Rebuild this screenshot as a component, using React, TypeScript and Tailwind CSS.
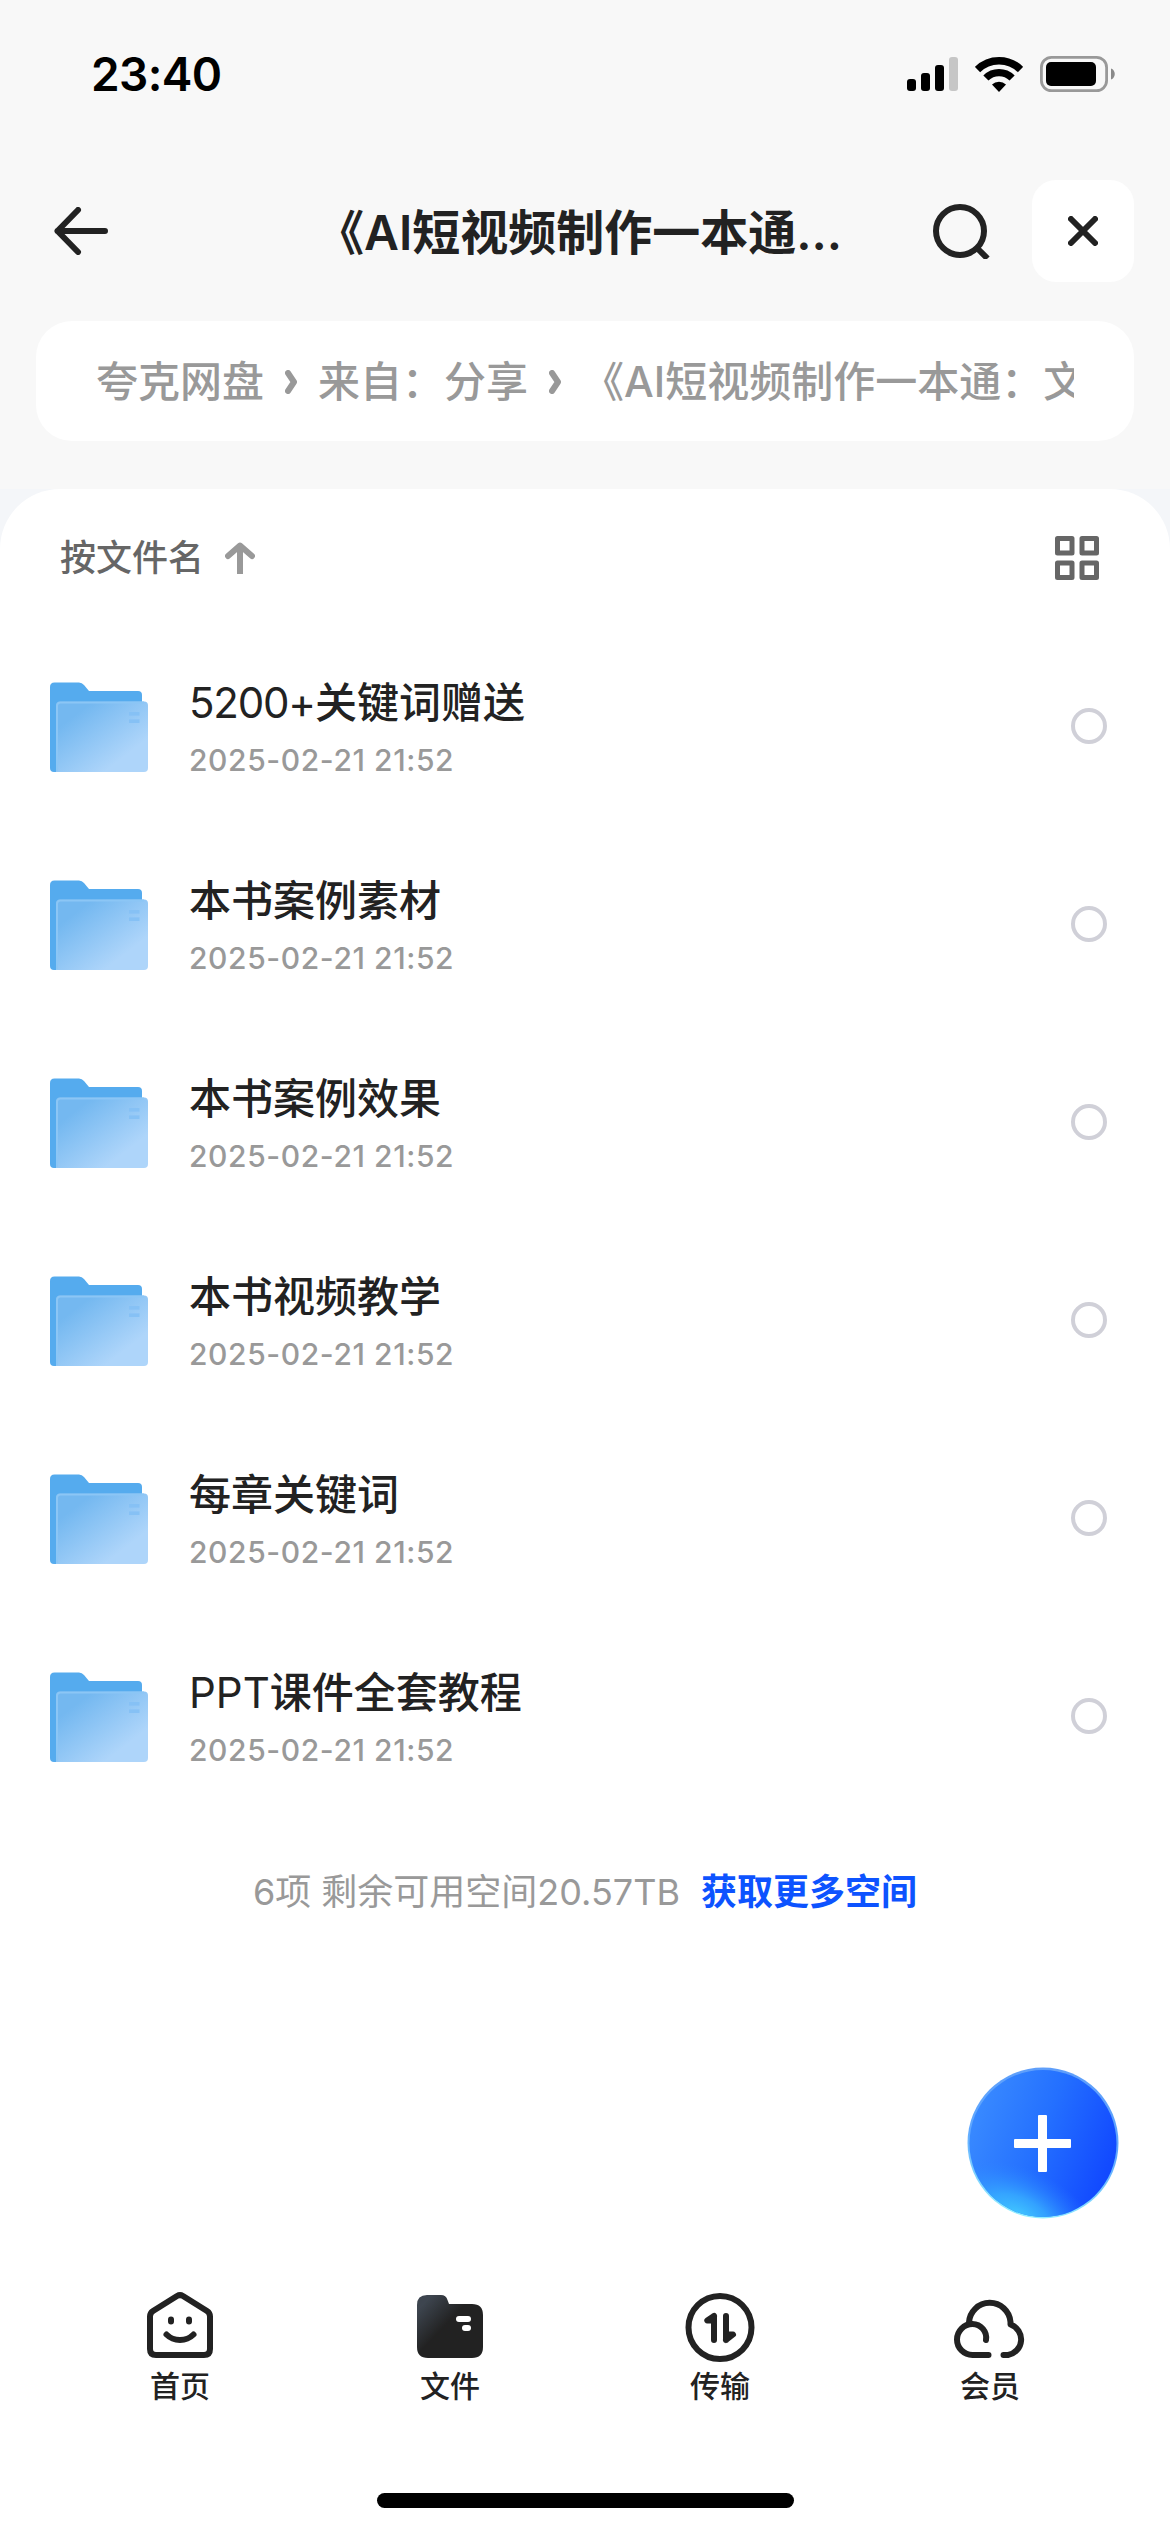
import React, { memo } from 'react';

interface FileItem {
  latin?: string;
  name: string;
  date: string;
}

const files: FileItem[] = [
  { latin: '5200+', name: '关键词赠送', date: '2025-02-21 21:52' },
  { name: '本书案例素材', date: '2025-02-21 21:52' },
  { name: '本书案例效果', date: '2025-02-21 21:52' },
  { name: '本书视频教学', date: '2025-02-21 21:52' },
  { name: '每章关键词', date: '2025-02-21 21:52' },
  { latin: 'PPT', name: '课件全套教程', date: '2025-02-21 21:52' },
];

function StatusBar() {
  return (
    <div className="flex h-[148px] items-center justify-between pr-[54px] pl-[91px]">
      <span className="text-[46px] leading-none font-semibold tracking-[-0.6px] text-black">23:40</span>
      <div className="flex items-center">
        <svg width="51" height="34" viewBox="0 0 51 34">
          <rect x="0" y="22" width="9" height="12" rx="3" />
          <rect x="14" y="16" width="9" height="18" rx="3" />
          <rect x="28" y="8" width="9" height="26" rx="3" />
          <rect x="42" y="0" width="9" height="34" rx="3" fill="#c6c6c6" />
        </svg>
        <svg className="ml-[17px]" width="48" height="36" viewBox="0 0 48 36">
          <path d="M2.5 13.5A30.5 30.5 0 0 1 45.5 13.5" fill="none" stroke="#000" strokeWidth="7.5" />
          <path d="M10.9 22A18.6 18.6 0 0 1 37.1 22" fill="none" stroke="#000" strokeWidth="7.3" />
          <path d="M24 36L17 28.6A10 10 0 0 1 31 28.6Z" />
        </svg>
        <svg className="ml-[17px]" width="76" height="36" viewBox="0 0 76 36">
          <rect x="1.4" y="1.4" width="65.2" height="33.2" rx="10" fill="none" stroke="#999" strokeWidth="2.8" />
          <rect x="6" y="6" width="50" height="24" rx="5" />
          <path d="M71 12.5C76 14 76 22 71 23.5Z" fill="#8a8a8a" />
        </svg>
      </div>
    </div>
  );
}

function Header() {
  return (
    <div className="mt-8 flex h-[102px] items-center pr-9 pl-[54px]">
      <svg width="54" height="48" viewBox="0 0 54 48" fill="none" stroke="#222" strokeWidth="6" strokeLinecap="round" strokeLinejoin="round">
        <path d="M51 24H3.5M24 3L3.5 24L24 45" />
      </svg>
      <h1 className="ml-[208px] w-[617px] pt-[3px] text-[48px] leading-[60px] font-semibold whitespace-nowrap text-[#222]">
        《AI短视频制作一本通...
      </h1>
      <svg width="57" height="56" viewBox="0 0 57 56" fill="none" stroke="#222" strokeWidth="6">
        <circle cx="27" cy="28" r="24" />
        <path d="M44 45L54.5 55.5" />
      </svg>
      <button className="ml-auto flex h-[102px] w-[102px] items-center justify-center rounded-[24px] bg-white">
        <svg width="30" height="30" viewBox="0 0 30 30" stroke="#222" strokeWidth="6" strokeLinecap="round">
          <path d="M3 3L27 27M27 3L3 27" />
        </svg>
      </button>
    </div>
  );
}

function Chevron() {
  return (
    <svg className="mr-[20px] ml-[21px] shrink-0" width="13" height="24" viewBox="0 0 13 24" fill="none" stroke="#999" strokeWidth="6" strokeLinecap="round" strokeLinejoin="round">
      <path d="M3 3L9 12L3 21" />
    </svg>
  );
}

function Breadcrumb() {
  return (
    <div className="mx-9 mt-[39px] flex h-[120px] items-center rounded-[36px] bg-white px-[60px]">
      <div className="flex items-center overflow-hidden pt-px text-[42px] leading-[60px] font-medium whitespace-nowrap text-[#999]">
        <span>夸克网盘</span>
        <Chevron />
        <span>来自：分享</span>
        <Chevron />
        <span>《AI短视频制作一本通：文</span>
      </div>
    </div>
  );
}

function FolderIcon() {
  return (
    <svg className="mt-[2px]" width="98" height="90" viewBox="0 0 98 90">
      <defs>
        <linearGradient id="folderFront" x1="0.1" y1="0.15" x2="0.85" y2="0.9">
          <stop offset="0.1" stopColor="#74b8f0" />
          <stop offset="0.85" stopColor="#aed5fa" />
        </linearGradient>
      </defs>
      <path d="M0 5Q0 0.5 4.5 0.5H29Q32 0.5 34 3L39 9H88Q92 9 92 13V40L8 90H4Q0 90 0 86Z" fill="#55abee" />
      <path d="M6 23.5Q6 19.5 10 19.5H94Q98 19.5 98 23.5V86Q98 90 94 90H6Z" fill="url(#folderFront)" />
      <path d="M7 89V24Q7 20.5 10.5 20.5H94" fill="none" stroke="#8cc6f5" strokeWidth="2" />
      <rect x="79" y="30" width="10.5" height="3.6" fill="#86c1f5" />
      <rect x="79" y="37.4" width="10.5" height="3.6" fill="#86c1f5" />
    </svg>
  );
}

const FileRow = memo(function FileRow({ file }: { file: FileItem }) {
  return (
    <li className="flex h-[198px] items-center pr-[63px] pl-[50px]">
      <FolderIcon />
      <div className="ml-[41px] flex flex-1 flex-col pt-[7px]">
        <span className="text-[42px] leading-[60px] font-[450] text-[#222]">
          {file.latin && (
            <span className={file.latin === 'PPT' ? 'font-normal' : 'font-normal tracking-[-1.2px]'}>{file.latin}</span>
          )}
          {file.name}
        </span>
        <span className="text-[30px] leading-[54px] font-medium tracking-[0.6px] text-[#999]">{file.date}</span>
      </div>
      <span className="h-9 w-9 rounded-full border-4 border-[#d0d0d8]" />
    </li>
  );
});

function AddButton() {
  return (
    <button className="absolute top-[2067px] left-[967px] h-[152px] w-[152px]">
      <svg width="152" height="152" viewBox="0 0 152 152">
        <defs>
          <linearGradient id="fabBase" x1="0" y1="0.3" x2="0.95" y2="0.65">
            <stop offset="0" stopColor="#3a8bff" />
            <stop offset="0.5" stopColor="#2470ff" />
            <stop offset="1" stopColor="#124aff" />
          </linearGradient>
          <radialGradient id="fabGlow" gradientUnits="userSpaceOnUse" cx="0" cy="0" r="1" gradientTransform="translate(50 150) rotate(24) scale(88 50)">
            <stop offset="0" stopColor="#43ccff" />
            <stop offset="0.4" stopColor="#38b0ff" stopOpacity="0.8" />
            <stop offset="1" stopColor="#2b80ff" stopOpacity="0" />
          </radialGradient>
          <linearGradient id="fabRim" x1="0.6" y1="0" x2="0.4" y2="1">
            <stop offset="0" stopColor="#5f9efa" />
            <stop offset="0.5" stopColor="#5fa8ff" />
            <stop offset="1" stopColor="#93f0ff" />
          </linearGradient>
        </defs>
        <circle cx="76" cy="76" r="75.5" fill="url(#fabRim)" />
        <circle cx="76" cy="76.5" r="73.5" fill="url(#fabBase)" />
        <circle cx="76" cy="76.5" r="73.5" fill="url(#fabGlow)" />
        <rect x="71" y="48" width="9" height="57" rx="1" fill="#fff" />
        <rect x="47" y="72" width="57" height="9" rx="1" fill="#fff" />
      </svg>
    </button>
  );
}

function HomeIcon() {
  return (
    <svg width="72" height="72" viewBox="0 0 72 72" fill="none" stroke="#222" strokeWidth="6" strokeLinecap="round" strokeLinejoin="round">
      <path d="M6 26.5Q6 23 9 21L33 6Q36 4.3 39 6L63 21Q66 23 66 26.5V59Q66 65 60 65H12Q6 65 6 59Z" />
      <path d="M27 29.5V31.5M45 29.5V31.5" />
      <path d="M22.5 44.5Q28 50 36 50T49.5 44.5" />
    </svg>
  );
}

function FolderTabIcon() {
  return (
    <svg width="72" height="72" viewBox="0 0 72 72">
      <defs>
        <linearGradient id="tabFolder" x1="0" y1="0.1" x2="0.5" y2="0.55">
          <stop offset="0.15" stopColor="#3d454f" />
          <stop offset="0.85" stopColor="#222" />
        </linearGradient>
      </defs>
      <path d="M3 15Q3 5 13 5H27Q32 5 33.5 10L35 14H58Q69 14 69 25V57Q69 68 58 68H14Q3 68 3 57Z" fill="url(#tabFolder)" />
      <rect x="42" y="26" width="15" height="6" rx="3" fill="#fff" />
      <rect x="48" y="35" width="9" height="6" rx="3" fill="#fff" />
    </svg>
  );
}

function TransferIcon() {
  return (
    <svg width="72" height="72" viewBox="0 0 72 72" fill="none" stroke="#222" strokeWidth="6" strokeLinecap="round" strokeLinejoin="round">
      <circle cx="36" cy="37.5" r="31.5" />
      <path d="M30 26V50M30 26L23.3 30.5H30" />
      <path d="M42 26V50M42 50L49 44.5H42" />
    </svg>
  );
}

function CloudIcon() {
  return (
    <svg className="overflow-visible" width="72" height="72" viewBox="0 0 72 72" fill="none" stroke="#222" strokeWidth="6" strokeLinecap="round" strokeLinejoin="round">
      <path d="M34.5 65H18.5A15.5 15.5 0 0 1 18.5 34A13.8 13.8 0 0 1 32 50" />
      <path d="M15 34V32.5A20.8 20.8 0 0 1 56.5 32V34.5A15.8 15.8 0 0 1 54 65H49.5" />
    </svg>
  );
}

const tabs = [
  { label: '首页', icon: <HomeIcon /> },
  { label: '文件', icon: <FolderTabIcon /> },
  { label: '传输', icon: <TransferIcon /> },
  { label: '会员', icon: <CloudIcon /> },
];

function TabBar() {
  return (
    <nav className="mt-auto flex h-[242px] px-[45px]">
      {tabs.map((tab) => (
        <div key={tab.label} className="flex flex-1 flex-col items-center">
          {tab.icon}
          <span className="mt-2 text-[30px] leading-[33px] font-medium text-[#222]">{tab.label}</span>
        </div>
      ))}
    </nav>
  );
}

export default function App() {
  return (
    <div className="relative flex h-[2532px] w-[1170px] flex-col overflow-hidden bg-[#f8f8f8] font-['Inter','Noto_Sans_CJK_SC',sans-serif]">
      <StatusBar />
      <Header />
      <Breadcrumb />
      <div className="mt-12 flex flex-1 flex-col bg-[#f4f6f9]">
        <main className="flex flex-1 flex-col rounded-t-[60px] bg-white">
          <div className="flex h-[138px] items-center pr-[71px] pl-[60px]">
            <span className="text-[36px] leading-none font-[450] text-[#666]">按文件名</span>
            <svg className="ml-[21px]" width="30" height="32" viewBox="0 0 30 32" fill="none" stroke="#999" strokeWidth="6" strokeLinejoin="round">
              <path d="M15 32V4" />
              <path d="M3 14L15 3.5L27 14" strokeLinecap="round" />
            </svg>
            <svg className="ml-auto" width="44" height="44" viewBox="0 0 44 44" fill="none" stroke="#666" strokeWidth="5" strokeLinejoin="round">
              <rect x="2.5" y="2.5" width="14.5" height="14.5" />
              <rect x="27" y="2.5" width="14.5" height="14.5" />
              <rect x="2.5" y="27" width="14.5" height="14.5" />
              <rect x="27" y="27" width="14.5" height="14.5" />
            </svg>
          </div>
          <ul>
            {files.map((file) => (
              <FileRow key={file.name} file={file} />
            ))}
          </ul>
          <div className="mt-[52px] flex justify-center text-[36px] leading-[50px] whitespace-nowrap">
            <span className="text-[#999]">6项 剩余可用空间20.57TB</span>
            <span className="ml-[21px] font-bold text-[#0d53ff]">获取更多空间</span>
          </div>
          <TabBar />
        </main>
      </div>
      <AddButton />
      <div className="absolute bottom-6 left-[377px] h-[15px] w-[417px] rounded-full bg-black" />
    </div>
  );
}
